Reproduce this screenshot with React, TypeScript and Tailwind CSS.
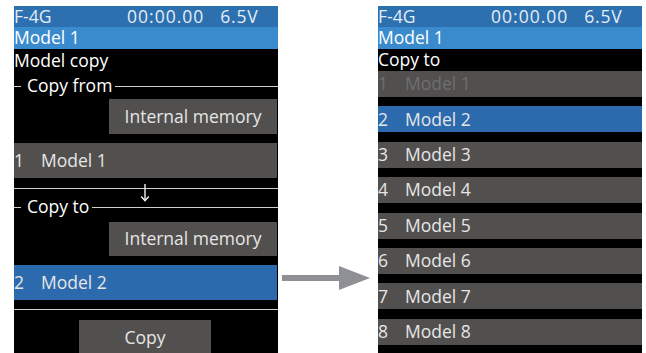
const FONT = { fontFamily: '"Open Sans", "Noto Sans", sans-serif' };

function StatusBar() {
  return (
    <>
      <div className="flex h-[21px] items-center justify-between bg-[#2d70b0] pr-[19.5px] text-[17.5px] leading-none text-[#e3edf7]">
        <span>F-4G</span>
        <span>
          <span className="tracking-[1px]">00:00.00</span>
          <span className="ml-[16px] tracking-[0.8px]">6.5V</span>
        </span>
      </div>
      <div className="flex h-[22px] items-center bg-[#3a8bcd] text-[17.5px] leading-none text-white">
        Model 1
      </div>
    </>
  );
}

function DownArrow() {
  return (
    <svg width="10" height="18" viewBox="0 0 10 18" className="absolute left-[126px] top-[-14px]">
      <path d="M5 0 V16.5" stroke="#f2f2f2" strokeWidth="1.4" />
      <path d="M1.2 12.5 L5 16.8 L8.8 12.5" stroke="#f2f2f2" strokeWidth="1.4" fill="none" />
    </svg>
  );
}

function Legend({ label, arrow }: { label: string; arrow?: boolean }) {
  return (
    <div className="relative flex h-[18px] items-center">
      <div className="h-px w-[7px] bg-[#cfcfcf]" />
      <span className="pl-[6px] pr-[3px] text-[17.5px] leading-none text-white">{label}</span>
      <div className="h-px flex-1 bg-[#cfcfcf]" />
      {arrow && <DownArrow />}
    </div>
  );
}

function Row({ num, name, tone, h = 'h-[35px]' }: { num: number; name: string; tone: 'gray' | 'blue' | 'dim'; h?: string }) {
  const bg = tone === 'blue' ? 'bg-[#2b6aad]' : 'bg-[#52504e]';
  const fg = tone === 'dim' ? 'text-[#6e6e72]' : 'text-[#e6e6e6]';
  return (
    <div className={`flex ${h} items-center ${bg} ${fg} text-[17.5px] leading-none`}>
      <span className="w-[27px]">{num}</span>
      <span>{name}</span>
    </div>
  );
}

function CopyScreen() {
  return (
    <div className="flex h-[347px] w-[264px] flex-col bg-black" style={FONT}>
      <StatusBar />
      <div className="flex h-[23px] items-center text-[17.5px] leading-none text-white">Model copy</div>
      <div className="mt-[5px]">
        <Legend label="Copy from" />
      </div>
      <div className="mt-[4px] flex justify-end pr-px">
        <div className="flex h-[35px] w-[168px] items-center justify-center bg-[#52504e] text-[17.5px] leading-none text-[#e6e6e6]">
          Internal memory
        </div>
      </div>
      <div className="mt-[9px] pr-px">
        <Row num={1} name="Model 1" tone="gray" />
      </div>
      <div className="mt-[10px] h-px bg-[#cfcfcf]" />
      <div className="mt-[9px]">
        <Legend label="Copy to" arrow />
      </div>
      <div className="mt-[6px] flex justify-end pr-px">
        <div className="flex h-[34px] w-[168px] items-center justify-center bg-[#52504e] text-[17.5px] leading-none text-[#e6e6e6]">
          Internal memory
        </div>
      </div>
      <div className="mt-[9px] pr-px">
        <Row num={2} name="Model 2" tone="blue" />
      </div>
      <div className="mt-[9px] h-px bg-[#cfcfcf]" />
      <div className="mt-[10px] flex justify-center pr-[2px]">
        <div className="flex h-[33px] w-[132px] items-start justify-center bg-[#52504e] pt-[9px] text-[17.5px] leading-none text-[#e6e6e6]">
          Copy
        </div>
      </div>
    </div>
  );
}

function TargetScreen() {
  const models = [2, 3, 4, 5, 6, 7, 8];
  return (
    <div className="flex h-[347px] w-[264px] flex-col bg-black" style={FONT}>
      <StatusBar />
      <div className="flex h-[22px] items-center text-[17.5px] leading-none text-white">Copy to</div>
      <div className="flex flex-col gap-[9.4px]">
        <Row num={1} name="Model 1" tone="dim" h="h-[26px]" />
        {models.map((n) => (
          <Row key={n} num={n} name={`Model ${n}`} tone={n === 2 ? 'blue' : 'gray'} h="h-[26px]" />
        ))}
      </div>
    </div>
  );
}

export default function App() {
  return (
    <div className="flex h-[353px] w-[646px] bg-white pl-[14px] pt-[6px]">
      <CopyScreen />
      <div className="flex w-[100px] items-start pt-[259px]">
        <svg width="92" height="26" viewBox="0 0 92 26" className="ml-[4px]">
          <rect x="0" y="10" width="62" height="6" fill="#8f9095" />
          <polygon points="57,1 88,13 57,25" fill="#8f9095" />
        </svg>
      </div>
      <TargetScreen />
    </div>
  );
}
